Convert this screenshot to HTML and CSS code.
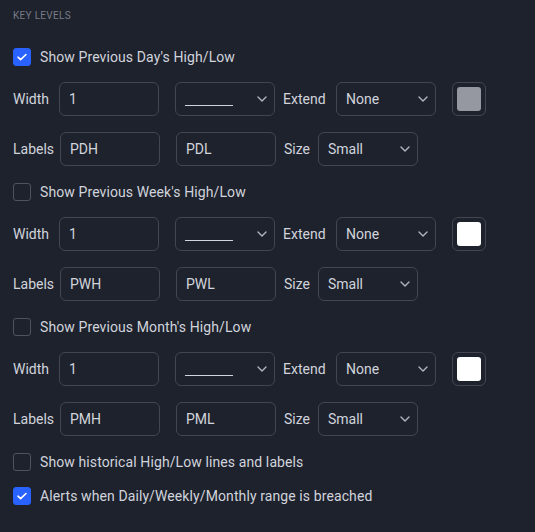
FILE: index.html
```html
<!DOCTYPE html>
<html>
<head>
<meta charset="utf-8">
<link rel="stylesheet" href="styles.css">
</head>
<body>
<div class="panel">
  <div class="heading">KEY LEVELS</div>

  <div class="section">
    <label class="check"><span class="box on"><svg viewBox="0 0 18 18"><path d="M5 9.2l2.6 2.5L13 6.5" /></svg></span>Show Previous Day's High/Low</label>
    <div class="row">
      <span class="lbl l-width">Width</span>
      <div class="field gapr">1</div>
      <div class="field sel"><span class="line"></span><svg class="chev" viewBox="0 0 10 6"><path d="M1 1l4 4 4-4"/></svg></div>
      <span class="lbl l-extend">Extend</span>
      <div class="field sel gapr"><span>None</span><svg class="chev" viewBox="0 0 10 6"><path d="M1 1l4 4 4-4"/></svg></div>
      <div class="swatch"><span class="chip gray"></span></div>
    </div>
    <div class="row">
      <span class="lbl l-labels">Labels</span>
      <div class="field gapr">PDH</div>
      <div class="field">PDL</div>
      <span class="lbl l-size">Size</span>
      <div class="field sel"><span>Small</span><svg class="chev" viewBox="0 0 10 6"><path d="M1 1l4 4 4-4"/></svg></div>
    </div>
  </div>

  <div class="section">
    <label class="check"><span class="box"></span>Show Previous Week's High/Low</label>
    <div class="row">
      <span class="lbl l-width">Width</span>
      <div class="field gapr">1</div>
      <div class="field sel"><span class="line"></span><svg class="chev" viewBox="0 0 10 6"><path d="M1 1l4 4 4-4"/></svg></div>
      <span class="lbl l-extend">Extend</span>
      <div class="field sel gapr"><span>None</span><svg class="chev" viewBox="0 0 10 6"><path d="M1 1l4 4 4-4"/></svg></div>
      <div class="swatch"><span class="chip white"></span></div>
    </div>
    <div class="row">
      <span class="lbl l-labels">Labels</span>
      <div class="field gapr">PWH</div>
      <div class="field">PWL</div>
      <span class="lbl l-size">Size</span>
      <div class="field sel"><span>Small</span><svg class="chev" viewBox="0 0 10 6"><path d="M1 1l4 4 4-4"/></svg></div>
    </div>
  </div>

  <div class="section">
    <label class="check"><span class="box"></span>Show Previous Month's High/Low</label>
    <div class="row">
      <span class="lbl l-width">Width</span>
      <div class="field gapr">1</div>
      <div class="field sel"><span class="line"></span><svg class="chev" viewBox="0 0 10 6"><path d="M1 1l4 4 4-4"/></svg></div>
      <span class="lbl l-extend">Extend</span>
      <div class="field sel gapr"><span>None</span><svg class="chev" viewBox="0 0 10 6"><path d="M1 1l4 4 4-4"/></svg></div>
      <div class="swatch"><span class="chip white"></span></div>
    </div>
    <div class="row">
      <span class="lbl l-labels">Labels</span>
      <div class="field gapr">PMH</div>
      <div class="field">PML</div>
      <span class="lbl l-size">Size</span>
      <div class="field sel"><span>Small</span><svg class="chev" viewBox="0 0 10 6"><path d="M1 1l4 4 4-4"/></svg></div>
    </div>
  </div>

  <div class="tail">
    <label class="check"><span class="box"></span>Show historical High/Low lines and labels</label>
    <label class="check"><span class="box on"><svg viewBox="0 0 18 18"><path d="M5 9.2l2.6 2.5L13 6.5" /></svg></span>Alerts when Daily/Weekly/Monthly range is breached</label>
  </div>
</div>
</body>
</html>
```
FILE: styles.css
```css
html, body {
  margin: 0;
  padding: 0;
  background: #1e222d;
}
body {
  font-family: Roboto, "Liberation Sans", sans-serif;
  font-size: 14px;
  color: #d1d4dc;
}
.panel {
  padding: 10px 0 0 13px;
  display: flex;
  flex-direction: column;
}
.heading {
  font-size: 10px;
  color: #787b86;
  line-height: 12px;
  letter-spacing: 0.3px;
  margin-bottom: 26px;
}
.section {
  display: flex;
  flex-direction: column;
  gap: 16px;
  margin-bottom: 17px;
}
.tail {
  display: flex;
  flex-direction: column;
  gap: 16px;
}
.check {
  display: flex;
  align-items: center;
  gap: 9px;
  height: 18px;
  line-height: 18px;
  letter-spacing: 0.1px;
}
.box {
  width: 18px;
  height: 18px;
  box-sizing: border-box;
  border: 1px solid #50535e;
  border-radius: 3px;
  flex: none;
  display: flex;
}
.box.on {
  background: #2962ff;
  border-color: #2962ff;
}
.box svg {
  width: 18px;
  height: 18px;
  margin: -1px;
}
.box path {
  fill: none;
  stroke: #fff;
  stroke-width: 1.6;
  stroke-linecap: round;
  stroke-linejoin: round;
}
.row {
  display: flex;
  align-items: center;
  gap: 8px;
  height: 34px;
}
.lbl {
  flex: none;
  white-space: nowrap;
}
.l-width { width: 38px; }
.l-labels { width: 39px; }
.l-extend { width: 45px; }
.l-size { width: 26px; }
.field {
  width: 100px;
  height: 34px;
  box-sizing: border-box;
  border: 1px solid #434651;
  border-radius: 6px;
  padding: 0 9px;
  display: flex;
  align-items: center;
  flex: none;
}
.gapr {
  margin-right: 8px;
}
.sel {
  justify-content: space-between;
}
.line {
  display: block;
  width: 48px;
  height: 1px;
  background: #d1d4dc;
  margin-top: 12px;
}
.chev {
  width: 10px;
  height: 6px;
  margin-right: -2px;
}
.chev path {
  fill: none;
  stroke: #b2b5be;
  stroke-width: 1.4;
  stroke-linecap: round;
  stroke-linejoin: round;
}
.swatch {
  width: 34px;
  height: 34px;
  box-sizing: border-box;
  border: 1px solid #434651;
  border-radius: 6px;
  display: flex;
  align-items: center;
  justify-content: center;
}
.chip {
  width: 24px;
  height: 24px;
  border-radius: 3px;
}
.chip.gray { background: #9598a1; }
.chip.white { background: #ffffff; }
```
